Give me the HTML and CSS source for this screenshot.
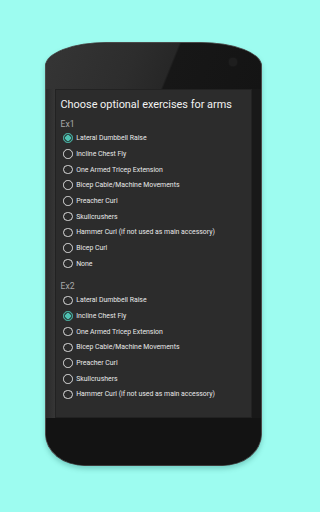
FILE: index.html
```html
<!DOCTYPE html>
<html>
<head>
<meta charset="utf-8">
<link rel="stylesheet" href="styles.css">
</head>
<body>
<div class="stage">
  <div class="phone">
    <div class="bezel-top"><span class="camera"></span></div>
    <div class="middle">
      <div class="side side-left"></div>
      <div class="screen">
        <div class="title">Choose optional exercises for arms</div>
        <div class="group-label">Ex1</div>
        <div class="options">
          <div class="opt checked"><span class="radio"></span><span class="label">Lateral Dumbbell Raise</span></div>
          <div class="opt"><span class="radio"></span><span class="label">Incline Chest Fly</span></div>
          <div class="opt"><span class="radio"></span><span class="label">One Armed Tricep Extension</span></div>
          <div class="opt"><span class="radio"></span><span class="label">Bicep Cable/Machine Movements</span></div>
          <div class="opt"><span class="radio"></span><span class="label">Preacher Curl</span></div>
          <div class="opt"><span class="radio"></span><span class="label">Skullcrushers</span></div>
          <div class="opt"><span class="radio"></span><span class="label">Hammer Curl (if not used as main accessory)</span></div>
          <div class="opt"><span class="radio"></span><span class="label">Bicep Curl</span></div>
          <div class="opt"><span class="radio"></span><span class="label">None</span></div>
        </div>
        <div class="group-label second">Ex2</div>
        <div class="options">
          <div class="opt"><span class="radio"></span><span class="label">Lateral Dumbbell Raise</span></div>
          <div class="opt checked"><span class="radio"></span><span class="label">Incline Chest Fly</span></div>
          <div class="opt"><span class="radio"></span><span class="label">One Armed Tricep Extension</span></div>
          <div class="opt"><span class="radio"></span><span class="label">Bicep Cable/Machine Movements</span></div>
          <div class="opt"><span class="radio"></span><span class="label">Preacher Curl</span></div>
          <div class="opt"><span class="radio"></span><span class="label">Skullcrushers</span></div>
          <div class="opt"><span class="radio"></span><span class="label">Hammer Curl (if not used as main accessory)</span></div>
        </div>
      </div>
      <div class="side side-right"></div>
    </div>
    <div class="bezel-bottom"></div>
  </div>
</div>
</body>
</html>
```
FILE: styles.css
```css
html, body {
  margin: 0;
  padding: 0;
  background: #9dfcf0;
}
body {
  width: 307px;
  height: 512px;
  overflow: hidden;
}
.stage {
  padding-top: 42px;
  padding-left: 45px;
}
.phone {
  position: relative;
  width: 217px;
  height: 424px;
  box-sizing: border-box;
  border-radius: 62px 62px 40px 40px / 24px 24px 32px 32px;
  background: #151515;
  border: 1.5px solid #4a4a4a;
  border-bottom-color: #3c3c3c;
  box-shadow: 0 3px 5px rgba(0, 80, 70, 0.25);
  display: flex;
  flex-direction: column;
  overflow: hidden;
}
.bezel-top {
  position: relative;
  height: 45.5px;
  background: linear-gradient(112deg, #353535 0%, #2d2d2d 40%, #272727 57%, #171717 58%, #141414 100%);
}
.camera {
  position: absolute;
  right: 24px;
  top: 15px;
  width: 8px;
  height: 8px;
  border-radius: 50%;
  background: #1e1e1e;
  box-shadow: 0 0 2px rgba(255, 255, 255, 0.08);
}
.middle {
  display: flex;
  height: 329px;
}
.side {
  flex: none;
}
.side-left {
  width: 8.5px;
  background: linear-gradient(90deg, #2a2a2a, #363636);
}
.side-right {
  width: 9.5px;
  background: #181818;
}
.screen {
  width: 197px;
  box-sizing: border-box;
  background: #2c2c2c;
  border: 0.5px solid #222;
  padding: 7px 0 0 5px;
  font-family: Roboto, "Noto Sans", sans-serif;
  color: #ececec;
  overflow: hidden;
}
.title {
  font-size: 10.9px;
  line-height: 16px;
  height: 16px;
  white-space: nowrap;
  color: #f2f2f2;
}
.group-label {
  margin-top: 5.3px;
  font-size: 8.6px;
  line-height: 12px;
  height: 12px;
  color: #a8a8a8;
}
.group-label.second {
  margin-top: 8.5px;
}
.options {
  display: flex;
  flex-direction: column;
  margin-top: 0.5px;
}
.opt {
  display: flex;
  align-items: center;
  height: 15.7px;
  padding-left: 2.5px;
  gap: 3.7px;
}
.radio {
  flex: none;
  width: 9.5px;
  height: 9.5px;
  box-sizing: border-box;
  border: 1.3px solid #dadada;
  border-radius: 50%;
}
.opt.checked .radio {
  border-color: #4fc2b2;
  background: radial-gradient(circle, #4fc2b2 0 2.6px, #2a4a46 3px);
}
.label {
  font-size: 6.9px;
  line-height: 10px;
  white-space: nowrap;
  color: #e8e8e8;
}
.bezel-bottom {
  flex: 1;
  background: #131313;
}
```
